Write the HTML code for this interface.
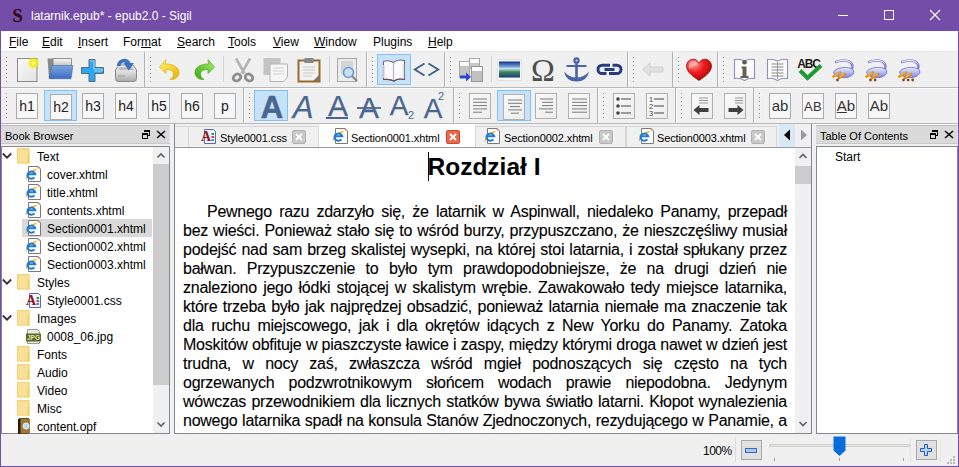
<!DOCTYPE html>
<html><head><meta charset="utf-8"><style>
*{margin:0;padding:0;box-sizing:border-box}
html,body{width:959px;height:467px;overflow:hidden}
body{position:relative;background:#f0f0f0;font-family:"Liberation Sans",sans-serif;font-size:12px;color:#000}
.a{position:absolute}
u{text-decoration:underline;text-underline-offset:1px;text-decoration-thickness:1px}
.grip{position:absolute;width:1px;background-image:linear-gradient(#8e8e8e 1px,transparent 1px);background-size:1px 4px}
.griph{position:absolute;width:1px;background-image:linear-gradient(#fdfdfd 1px,transparent 1px);background-size:1px 4px}
.hb{position:absolute;border:1px solid #ababab;background:#f7f7f7;font-size:14px;text-align:center;line-height:24px;color:#222}
.ib{position:absolute;border:1px solid #b0b0b0;background:linear-gradient(135deg,#fafafa,#ececec)}
.jl{position:absolute;font-size:16px;letter-spacing:-0.26px;-webkit-text-stroke:0.1px #000;line-height:19px;height:19px;text-align:justify;text-align-last:justify;white-space:nowrap;overflow:visible}
</style></head><body>
<div class="a" style="left:0px;top:0px;width:959px;height:31px;background:#744da9"></div>
<svg class="a" style="left:11px;top:7px" width="13" height="16" viewBox="0 0 13 16"><text x="6.5" y="14.5" text-anchor="middle" font-family="Liberation Serif" font-weight="bold" font-size="19" fill="#300810">S</text></svg>
<div class="a" style="left:31px;top:9px;white-space:nowrap;color:#fff;font-size:12px">latarnik.epub* - epub2.0 - Sigil</div>
<div class="a" style="left:838px;top:15px;width:10px;height:1px;background:#fff"></div>
<div class="a" style="left:884px;top:10px;width:10px;height:10px;border:1px solid #fff"></div>
<svg class="a" style="left:929px;top:9px" width="12" height="12" viewBox="0 0 12 12"><path d="M1 1L11 11M11 1L1 11" stroke="#fff" stroke-width="1.1"/></svg>
<div class="a" style="left:1px;top:31px;width:957px;height:20px;background:#fff"></div>
<div class="a" style="left:9px;top:35px;white-space:nowrap;font-size:12px"><u>F</u>ile</div>
<div class="a" style="left:42px;top:35px;white-space:nowrap;font-size:12px"><u>E</u>dit</div>
<div class="a" style="left:78px;top:35px;white-space:nowrap;font-size:12px"><u>I</u>nsert</div>
<div class="a" style="left:123px;top:35px;white-space:nowrap;font-size:12px">For<u>m</u>at</div>
<div class="a" style="left:177px;top:35px;white-space:nowrap;font-size:12px"><u>S</u>earch</div>
<div class="a" style="left:228px;top:35px;white-space:nowrap;font-size:12px"><u>T</u>ools</div>
<div class="a" style="left:273px;top:35px;white-space:nowrap;font-size:12px"><u>V</u>iew</div>
<div class="a" style="left:314px;top:35px;white-space:nowrap;font-size:12px"><u>W</u>indow</div>
<div class="a" style="left:373px;top:35px;white-space:nowrap;font-size:12px">Plugins</div>
<div class="a" style="left:428px;top:35px;white-space:nowrap;font-size:12px"><u>H</u>elp</div>
<div class="a" style="left:1px;top:51px;width:957px;height:73px;background:#f0f0f0"></div>
<div class="a" style="left:1px;top:51px;width:957px;height:1px;background:#e6e6e6"></div>
<div class="a" style="left:1px;top:87px;width:957px;height:1px;background:#b9b9b9"></div>
<div class="a" style="left:1px;top:88px;width:957px;height:1px;background:#fbfbfb"></div>
<div class="a" style="left:1px;top:123px;width:957px;height:1px;background:#b9b9b9"></div>
<div class="a" style="left:1px;top:124px;width:957px;height:1px;background:#fbfbfb"></div>
<div class="a griph" style="left:7px;top:58px;height:25px"></div>
<div class="a grip" style="left:6px;top:57px;height:25px"></div>
<div class="a griph" style="left:151px;top:58px;height:25px"></div>
<div class="a grip" style="left:150px;top:57px;height:25px"></div>
<div class="a griph" style="left:373px;top:58px;height:25px"></div>
<div class="a grip" style="left:372px;top:57px;height:25px"></div>
<div class="a griph" style="left:451px;top:58px;height:25px"></div>
<div class="a grip" style="left:450px;top:57px;height:25px"></div>
<div class="a griph" style="left:634px;top:58px;height:25px"></div>
<div class="a grip" style="left:633px;top:57px;height:25px"></div>
<div class="a griph" style="left:679px;top:58px;height:25px"></div>
<div class="a grip" style="left:678px;top:57px;height:25px"></div>
<div class="a griph" style="left:724px;top:58px;height:25px"></div>
<div class="a grip" style="left:723px;top:57px;height:25px"></div>
<div class="a" style="left:144px;top:52px;width:1px;height:35px;background:#b0b0b0"></div>
<div class="a" style="left:145px;top:52px;width:1px;height:35px;background:#fbfbfb"></div>
<div class="a" style="left:366px;top:52px;width:1px;height:35px;background:#b0b0b0"></div>
<div class="a" style="left:367px;top:52px;width:1px;height:35px;background:#fbfbfb"></div>
<div class="a" style="left:444px;top:52px;width:1px;height:35px;background:#b0b0b0"></div>
<div class="a" style="left:445px;top:52px;width:1px;height:35px;background:#fbfbfb"></div>
<div class="a" style="left:627px;top:52px;width:1px;height:35px;background:#b0b0b0"></div>
<div class="a" style="left:628px;top:52px;width:1px;height:35px;background:#fbfbfb"></div>
<div class="a" style="left:672px;top:52px;width:1px;height:35px;background:#b0b0b0"></div>
<div class="a" style="left:673px;top:52px;width:1px;height:35px;background:#fbfbfb"></div>
<div class="a" style="left:717px;top:52px;width:1px;height:35px;background:#b0b0b0"></div>
<div class="a" style="left:718px;top:52px;width:1px;height:35px;background:#fbfbfb"></div>
<div class="a" style="left:223px;top:56px;width:1px;height:26px;background:#d4d4d4"></div>
<div class="a" style="left:329px;top:56px;width:1px;height:26px;background:#d4d4d4"></div>
<div class="a" style="left:491px;top:56px;width:1px;height:26px;background:#d4d4d4"></div>
<div class="a griph" style="left:7px;top:94px;height:25px"></div>
<div class="a grip" style="left:6px;top:93px;height:25px"></div>
<div class="a griph" style="left:250px;top:94px;height:25px"></div>
<div class="a grip" style="left:249px;top:93px;height:25px"></div>
<div class="a griph" style="left:460px;top:94px;height:25px"></div>
<div class="a grip" style="left:459px;top:93px;height:25px"></div>
<div class="a griph" style="left:604px;top:94px;height:25px"></div>
<div class="a grip" style="left:603px;top:93px;height:25px"></div>
<div class="a griph" style="left:682px;top:94px;height:25px"></div>
<div class="a grip" style="left:681px;top:93px;height:25px"></div>
<div class="a griph" style="left:760px;top:94px;height:25px"></div>
<div class="a grip" style="left:759px;top:93px;height:25px"></div>
<div class="a" style="left:243px;top:88px;width:1px;height:35px;background:#b0b0b0"></div>
<div class="a" style="left:244px;top:88px;width:1px;height:35px;background:#fbfbfb"></div>
<div class="a" style="left:453px;top:88px;width:1px;height:35px;background:#b0b0b0"></div>
<div class="a" style="left:454px;top:88px;width:1px;height:35px;background:#fbfbfb"></div>
<div class="a" style="left:597px;top:88px;width:1px;height:35px;background:#b0b0b0"></div>
<div class="a" style="left:598px;top:88px;width:1px;height:35px;background:#fbfbfb"></div>
<div class="a" style="left:675px;top:88px;width:1px;height:35px;background:#b0b0b0"></div>
<div class="a" style="left:676px;top:88px;width:1px;height:35px;background:#fbfbfb"></div>
<div class="a" style="left:753px;top:88px;width:1px;height:35px;background:#b0b0b0"></div>
<div class="a" style="left:754px;top:88px;width:1px;height:35px;background:#fbfbfb"></div>
<svg class="a" style="left:16px;top:57px" width="24" height="26" viewBox="0 0 24 26"><defs><linearGradient id="gd" x1="0" y1="0" x2="1" y2="1"><stop offset="0" stop-color="#fafafa"/><stop offset="1" stop-color="#e2e2e2"/></linearGradient><radialGradient id="gy"><stop offset="0" stop-color="#ffffa0"/><stop offset=".45" stop-color="#f4ec10"/><stop offset="1" stop-color="#f4ec10" stop-opacity="0"/></radialGradient></defs><rect x="1.5" y="1.5" width="19.5" height="23" fill="url(#gd)" stroke="#8a8a8a"/><circle cx="17.5" cy="6" r="6.5" fill="url(#gy)"/></svg>
<svg class="a" style="left:47px;top:57px" width="27" height="23" viewBox="0 0 27 23"><defs><linearGradient id="gf" x1="0" y1="0" x2="0" y2="1"><stop offset="0" stop-color="#7aa8e0"/><stop offset="1" stop-color="#3a6cc0"/></linearGradient><linearGradient id="gpp" x1="0" y1="0" x2="0" y2="1"><stop offset="0" stop-color="#fafafa"/><stop offset="1" stop-color="#b8b8b8"/></linearGradient></defs><path d="M0.5 1.5H7V21.5H2z" fill="#8a8a8a"/><path d="M6 1.5H24.5V10H6z" fill="url(#gpp)" stroke="#7a7a7a" stroke-width=".8"/><path d="M4.7 8.6H25.9L24 21.7H2.1z" fill="url(#gf)" stroke="#3a64a8" stroke-width=".6"/></svg>
<svg class="a" style="left:80px;top:58px" width="25" height="24" viewBox="0 0 25 24"><path d="M9 1.5h6v8h8.5v6H15v8H9v-8H1.5v-6H9z" fill="#2aa7f0" stroke="#5e6a74" stroke-width="1"/><path d="M10 3h4v8h8v2h-8" fill="none" stroke="#8fd6ff" stroke-width="1"/></svg>
<svg class="a" style="left:113px;top:57px" width="26" height="26" viewBox="0 0 26 26"><defs><linearGradient id="gs" x1="0" y1="0" x2="0" y2="1"><stop offset="0" stop-color="#f4f4f4"/><stop offset=".5" stop-color="#d8d8d8"/><stop offset="1" stop-color="#a8a8a8"/></linearGradient></defs><path d="M2.5 13L6 8H20L23.5 13V21.5Q23.5 24.5 20.5 24.5H5.5Q2.5 24.5 2.5 21.5Z" fill="url(#gs)" stroke="#8a8a8a"/><path d="M5 13H21L19 10H7z" fill="#bcbcbc"/><path d="M5 19h7" stroke="#9a9a9a"/><path d="M5.5 9C6.5 3.5 13 1.5 16 6.5" fill="none" stroke="#3a72c4" stroke-width="3.6"/><path d="M10.5 6H21L15.8 13.5z" fill="#3a72c4"/></svg>
<svg class="a" style="left:158px;top:58px" width="23" height="23" viewBox="0 0 23 23"><defs><linearGradient id="gu" x1="0" y1="0" x2="1" y2="1"><stop offset="0" stop-color="#fff070"/><stop offset="1" stop-color="#e8b400"/></linearGradient><linearGradient id="gr" x1="1" y1="0" x2="0" y2="1"><stop offset="0" stop-color="#a8f070"/><stop offset="1" stop-color="#3aa810"/></linearGradient></defs><path d="M8 1.5L1.5 9 8 15.5v-4c4.5 0 7.5 1.5 7.5 4.5 0 2.5-1.5 4.5-3.5 5.5 5 .5 9-2.5 9-7 0-5-5-8.5-13.5-8.5z" fill="url(#gu)" stroke="#d8a800" stroke-width=".6"/></svg>
<svg class="a" style="left:193px;top:58px" width="23" height="23" viewBox="0 0 23 23"><defs><linearGradient id="gr2" x1="1" y1="0" x2="0" y2="1"><stop offset="0" stop-color="#a8f070"/><stop offset="1" stop-color="#3aa810"/></linearGradient></defs><path d="M15 1.5L21.5 9 15 15.5v-4c-4.5 0-7.5 1.5-7.5 4.5 0 2.5 1.5 4.5 3.5 5.5-5 .5-9-2.5-9-7 0-5 5-8.5 13.5-8.5z" fill="url(#gr2)" stroke="#3e9a10" stroke-width=".6"/></svg>
<svg class="a" style="left:231px;top:57px" width="24" height="26" viewBox="0 0 24 26"><path d="M5 1.5l8.5 15M19 1.5l-8.5 15" stroke="#b4b4b4" stroke-width="2.6"/><ellipse cx="6" cy="20.5" rx="4" ry="3.2" transform="rotate(-35 6 20.5)" fill="none" stroke="#8e8e8e" stroke-width="2.8"/><ellipse cx="18" cy="20.5" rx="4" ry="3.2" transform="rotate(35 18 20.5)" fill="none" stroke="#8e8e8e" stroke-width="2.8"/></svg>
<svg class="a" style="left:263px;top:57px" width="26" height="26" viewBox="0 0 26 26"><rect x="0.5" y="1" width="17" height="17" fill="#c4c4c4"/><path d="M7 7h17.5v13l-4 4.5H7z" fill="#f6f6f6" stroke="#b4b4b4"/><path d="M10 11h11M10 14h11M10 17h11" stroke="#d0d0d0"/></svg>
<svg class="a" style="left:297px;top:57px" width="24" height="26" viewBox="0 0 24 26"><rect x="1.5" y="3.5" width="21" height="21" fill="#f2f2f2" stroke="#9a6a28" stroke-width="2"/><rect x="7" y="1" width="10" height="5" rx="1.5" fill="#888"/><path d="M6 10h12M6 13h12M6 16h12M6 19h9" stroke="#c8c8c8"/><path d="M16 24l6-6v6z" fill="#777"/></svg>
<svg class="a" style="left:336px;top:57px" width="26" height="27" viewBox="0 0 26 27"><rect x="1.5" y="1.5" width="19" height="23" fill="#ececec" stroke="#a8a8a8"/><rect x="5" y="4" width="12" height="13" fill="#d4d4d4"/><circle cx="12.5" cy="15.5" r="5" fill="#c8e0f4" stroke="#6a9ad0" stroke-width="1.6"/><path d="M16 19l5 5" stroke="#8a8a8a" stroke-width="2.2"/></svg>
<div class="a" style="left:377px;top:54px;width:34px;height:31px;background:#c6e1f8;border:1px solid #84c2f4"></div>
<svg class="a" style="left:381px;top:58px" width="26" height="25" viewBox="0 0 26 25"><path d="M2.5 3.5C5 2.5 9 2.5 12.5 4.5 15 2 19 1.5 23.5 2.5V21.5C19 20.5 15.5 21 13 23 10 21.5 6 21 2.5 21.5z" fill="#fafafa" stroke="#6a6a80" stroke-width="1.1"/><path d="M12.5 4.5V22.5" stroke="#b8b8c0" stroke-width="1.2"/><path d="M3 7v13M22.5 6v14" stroke="#dcdcdc" stroke-width="1.5"/><path d="M2.5 21.5C6 21 10 21.5 13 23 15.5 21 19 20.5 23.5 21.5" fill="none" stroke="#6a4a5a" stroke-width="1.2"/></svg>
<svg class="a" style="left:413px;top:60px" width="27" height="19" viewBox="0 0 27 19"><path d="M11.5 3.5L1.8 9.5 11.5 15.5M15.5 3.5L25.2 9.5 15.5 15.5" fill="none" stroke="#415e8e" stroke-width="1.9"/></svg>
<svg class="a" style="left:457px;top:57px" width="27" height="26" viewBox="0 0 27 26"><rect x="2.5" y="4.5" width="10" height="16" fill="#c4c4c4" stroke="#a8a8a8"/><rect x="3" y="5" width="9" height="4" fill="#fafafa"/><rect x="12.5" y="1.5" width="10" height="10" fill="#c8c8c8" stroke="#a8a8a8"/><rect x="13" y="2" width="9" height="4" fill="#fafafa"/><rect x="14.5" y="9.5" width="11" height="15" fill="#c0c0c0" stroke="#989898"/><rect x="15" y="10" width="10" height="4" fill="#fafafa"/><path d="M3 18.5h6v-3l5 4.5-5 4.5v-3H3z" fill="#2a4ac8"/></svg>
<svg class="a" style="left:497px;top:59px" width="25" height="22" viewBox="0 0 25 22"><defs><linearGradient id="gi" x1="0" y1="0" x2="0" y2="1"><stop offset="0" stop-color="#10308a"/><stop offset=".3" stop-color="#6a9ad0"/><stop offset=".45" stop-color="#c8e0f0"/><stop offset=".65" stop-color="#3a8a5a"/><stop offset=".85" stop-color="#2a5a7a"/><stop offset="1" stop-color="#1a3a5a"/></linearGradient></defs><rect x="0.5" y="0.5" width="24" height="21" fill="#f6f6f6" stroke="#e0e0e0"/><rect x="2" y="2.5" width="21" height="16" fill="url(#gi)"/></svg>
<svg class="a" style="left:531px;top:57px" width="24" height="26" viewBox="0 0 24 26"><text x="12" y="23.5" text-anchor="middle" font-family="Liberation Serif" font-size="32" fill="#4e4e4e">&#937;</text></svg>
<svg class="a" style="left:563px;top:56px" width="27" height="28" viewBox="0 0 27 28"><circle cx="13.5" cy="4.5" r="2.1" fill="#dde4f4" stroke="#4a62a8" stroke-width="2.2"/><path d="M13.5 6.5V24" stroke="#4a62a8" stroke-width="2.6"/><path d="M3.5 10H23.5" stroke="#4a62a8" stroke-width="2"/><path d="M1 15.5Q3 25.5 13.5 25.5Q24 25.5 26 15.5Q21 21.5 13.5 21.5Q6 21.5 1 15.5z" fill="#4a62a8"/></svg>
<svg class="a" style="left:596px;top:62px" width="27" height="15" viewBox="0 0 27 15"><path d="M14 3.2H6.2A4.2 4.2 0 0 0 6.2 11.6H10.5M13 11.6H20.8A4.2 4.2 0 0 0 20.8 3.2H16.5M8.5 7.4H18.5" fill="none" stroke="#283c84" stroke-width="3"/></svg>
<svg class="a" style="left:641px;top:61px" width="24" height="17" viewBox="0 0 24 17"><path d="M1.5 8.5L9 2v4h13v5H9v4z" fill="#e0e0e0" stroke="#cfcfcf"/></svg>
<svg class="a" style="left:685px;top:57px" width="28" height="26" viewBox="0 0 28 26"><defs><radialGradient id="gh" cx=".3" cy=".25" r=".85"><stop offset="0" stop-color="#ff9a9a"/><stop offset=".45" stop-color="#ee2020"/><stop offset="1" stop-color="#a80000"/></radialGradient></defs><path d="M14 23.5C8 19.5 1.5 15 1.5 9.2 1.5 5 4.5 2.2 8.2 2.2 11 2.2 13 4 14 6 15 4 17 2.2 19.8 2.2 23.5 2.2 26.5 5 26.5 9.2 26.5 15 20 19.5 14 23.5z" fill="url(#gh)" stroke="#8a0000" stroke-width=".7"/><path d="M4 8.5C4 5.5 6 4 8.5 4 11 4 12.5 5.5 13.5 7.5 10 8 7 10 4.5 12z" fill="#ffc8c8" opacity=".6"/></svg>
<svg class="a" style="left:732px;top:57px" width="25" height="26" viewBox="0 0 25 26"><path d="M2.5 2.5V21.5Q8 20.5 12.5 23.5Q17 20.5 22.5 21.5V2.5Q17 1.5 12.5 4Q8 1.5 2.5 2.5z" fill="#fbfbfb" stroke="#9090b8" stroke-width="1.1"/><circle cx="12.5" cy="5.2" r="2.3" fill="#5a5a58"/><path d="M9.5 9.5h5v9.5h2v2h-8v-2h2V11.5h-1z" fill="#6a6250"/></svg>
<svg class="a" style="left:765px;top:57px" width="25" height="26" viewBox="0 0 25 26"><path d="M2.5 2.5V21.5Q8 20.5 12.5 23.5Q17 20.5 22.5 21.5V2.5Q17 1.5 12.5 4Q8 1.5 2.5 2.5z" fill="#fbfbfb" stroke="#9090b8" stroke-width="1.1"/><path d="M6.5 7h12M6.5 10h12M6.5 13h12M6.5 16h12M6.5 19h12" stroke="#8a8a8a" stroke-width="1.1"/><path d="M12.5 5v17" stroke="#8a8a8a" stroke-width=".8"/></svg>
<svg class="a" style="left:796px;top:56px" width="27" height="27" viewBox="0 0 27 27"><text x="12.5" y="12" text-anchor="middle" font-family="Liberation Sans" font-weight="bold" font-size="13" fill="#1a1a1a" letter-spacing="-1.3" transform="translate(12.5 0) scale(0.92 1) translate(-12.5 0)">ABC</text><path d="M4 14.5l7.5 7.5L25 9.5" fill="none" stroke="#1e9a30" stroke-width="4"/></svg>
<svg class="a" style="left:831px;top:58px" width="26" height="26" viewBox="0 0 26 26"><defs><linearGradient id="gp" x1="0" y1="0" x2="0" y2="1"><stop offset="0" stop-color="#e8ecff"/><stop offset="1" stop-color="#8088e0"/></linearGradient></defs><path d="M5 4C11 1.5 18 2 20.5 5.5 22 8 21.5 10 20.5 11.5" fill="none" stroke="#8a8ad8" stroke-width="2.6" stroke-linecap="round"/><path d="M5 4C11 1.5 18 2 20.5 5.5" fill="none" stroke="#f4f4ff" stroke-width="1"/><path d="M2.5 14C5 9 18 8 22 11.5 24.5 15.5 20.5 19 15 19.5 9 20 3.5 18.5 2.5 14z" fill="url(#gp)" stroke="#6a6ac0" stroke-width=".8"/><path d="M2.5 18.5L9 14.5M8 20L14 16" stroke="#e88a00" stroke-width="2.6" stroke-linecap="round"/><path d="M3.5 17.5L8.5 14.6M9 19L13.5 16.1" stroke="#ffd040" stroke-width=".9"/><circle cx="6.5" cy="22" r="1.4" fill="#8a4a20"/></svg>
<svg class="a" style="left:864px;top:58px" width="26" height="26" viewBox="0 0 26 26"><defs><linearGradient id="gp" x1="0" y1="0" x2="0" y2="1"><stop offset="0" stop-color="#e8ecff"/><stop offset="1" stop-color="#8088e0"/></linearGradient></defs><path d="M5 4C11 1.5 18 2 20.5 5.5 22 8 21.5 10 20.5 11.5" fill="none" stroke="#8a8ad8" stroke-width="2.6" stroke-linecap="round"/><path d="M5 4C11 1.5 18 2 20.5 5.5" fill="none" stroke="#f4f4ff" stroke-width="1"/><path d="M2.5 14C5 9 18 8 22 11.5 24.5 15.5 20.5 19 15 19.5 9 20 3.5 18.5 2.5 14z" fill="url(#gp)" stroke="#6a6ac0" stroke-width=".8"/><path d="M2.5 18.5L9 14.5M8 20L14 16" stroke="#e88a00" stroke-width="2.6" stroke-linecap="round"/><path d="M3.5 17.5L8.5 14.6M9 19L13.5 16.1" stroke="#ffd040" stroke-width=".9"/><circle cx="6.5" cy="22" r="1.4" fill="#8a4a20"/><circle cx="11.1" cy="22" r="1.4" fill="#8a4a20"/></svg>
<svg class="a" style="left:897px;top:58px" width="26" height="26" viewBox="0 0 26 26"><defs><linearGradient id="gp" x1="0" y1="0" x2="0" y2="1"><stop offset="0" stop-color="#e8ecff"/><stop offset="1" stop-color="#8088e0"/></linearGradient></defs><path d="M5 4C11 1.5 18 2 20.5 5.5 22 8 21.5 10 20.5 11.5" fill="none" stroke="#8a8ad8" stroke-width="2.6" stroke-linecap="round"/><path d="M5 4C11 1.5 18 2 20.5 5.5" fill="none" stroke="#f4f4ff" stroke-width="1"/><path d="M2.5 14C5 9 18 8 22 11.5 24.5 15.5 20.5 19 15 19.5 9 20 3.5 18.5 2.5 14z" fill="url(#gp)" stroke="#6a6ac0" stroke-width=".8"/><path d="M2.5 18.5L9 14.5M8 20L14 16" stroke="#e88a00" stroke-width="2.6" stroke-linecap="round"/><path d="M3.5 17.5L8.5 14.6M9 19L13.5 16.1" stroke="#ffd040" stroke-width=".9"/><circle cx="6.5" cy="22" r="1.4" fill="#8a4a20"/><circle cx="11.1" cy="22" r="1.4" fill="#8a4a20"/><circle cx="15.7" cy="22" r="1.4" fill="#8a4a20"/></svg>
<div class="a hb" style="left:16px;top:93px;width:22px;height:26px"><span>h1</span></div>
<div class="a" style="left:44px;top:90px;width:33px;height:31px;background:#c6e1f8;border:1px solid #84c2f4"></div>
<div class="a hb" style="left:50px;top:94px;width:22px;height:26px"><span>h2</span></div>
<div class="a hb" style="left:82px;top:93px;width:22px;height:26px"><span>h3</span></div>
<div class="a hb" style="left:115px;top:93px;width:22px;height:26px"><span>h4</span></div>
<div class="a hb" style="left:148px;top:93px;width:22px;height:26px"><span>h5</span></div>
<div class="a hb" style="left:181px;top:93px;width:22px;height:26px"><span>h6</span></div>
<div class="a hb" style="left:214px;top:93px;width:22px;height:26px"><span>p</span></div>
<div class="a" style="left:254px;top:90px;width:34px;height:31px;background:#c6e1f8;border:1px solid #84c2f4"></div>
<svg class="a" style="left:258px;top:91px" width="28" height="30" viewBox="0 0 28 30"><text x="14" y="27" text-anchor="middle" font-family="Liberation Sans" font-weight="bold" font-size="31" fill="#4a6690" stroke="#4a6690" stroke-width="0.6">A</text></svg>
<svg class="a" style="left:289px;top:91px" width="28" height="30" viewBox="0 0 28 30"><text x="14" y="27" text-anchor="middle" font-family="Liberation Sans" font-style="italic" font-size="31" fill="#4a6690" stroke="#4a6690" stroke-width="0.25">A</text></svg>
<svg class="a" style="left:324px;top:91px" width="28" height="30" viewBox="0 0 28 30"><text x="14" y="25" text-anchor="middle" font-family="Liberation Sans" font-size="30" fill="#4a6690" stroke="#4a6690" stroke-width="0.25">A</text><path d="M2 27h22" stroke="#4a6690" stroke-width="2"/></svg>
<svg class="a" style="left:355px;top:91px" width="28" height="30" viewBox="0 0 28 30"><text x="14" y="27" text-anchor="middle" font-family="Liberation Sans" font-size="30" fill="#4a6690" stroke="#4a6690" stroke-width="0.25">A</text><path d="M2 17h24" stroke="#4a6690" stroke-width="1.8"/></svg>
<svg class="a" style="left:389px;top:91px" width="28" height="30" viewBox="0 0 28 30"><text x="10" y="24" text-anchor="middle" font-family="Liberation Sans" font-size="28" fill="#4a6690" stroke="#4a6690" stroke-width="0.25">A</text><text x="22" y="28" text-anchor="middle" font-family="Liberation Sans" font-size="11" fill="#4a6690">2</text></svg>
<svg class="a" style="left:421px;top:91px" width="28" height="30" viewBox="0 0 28 30"><text x="12" y="27" text-anchor="middle" font-family="Liberation Sans" font-size="28" fill="#4a6690" stroke="#4a6690" stroke-width="0.25">A</text><text x="20" y="9" text-anchor="middle" font-family="Liberation Sans" font-size="11" fill="#4a6690">2</text></svg>
<div class="a ib" style="left:469px;top:93px;width:22px;height:26px"></div>
<svg class="a" style="left:469px;top:93px" width="22" height="26" viewBox="0 0 22 26"><path d="M4 6h14M4 9.3h14M4 12.6h14M4 15.9h14M4 19.2h9" stroke="#7a7a7a" stroke-width="1"/></svg>
<div class="a" style="left:497px;top:90px;width:34px;height:31px;background:#c6e1f8;border:1px solid #84c2f4"></div>
<div class="a ib" style="left:503px;top:94px;width:22px;height:26px"></div>
<svg class="a" style="left:503px;top:94px" width="22" height="26" viewBox="0 0 22 26"><path d="M5 6h14M5 9.3h14M7 12.6h10M5 15.9h14M8 19.2h8" stroke="#7a7a7a" stroke-width="1"/></svg>
<div class="a ib" style="left:535px;top:93px;width:22px;height:26px"></div>
<svg class="a" style="left:535px;top:93px" width="22" height="26" viewBox="0 0 22 26"><path d="M5 6h13M7 9.3h11M7 12.6h11M4 15.9h14M10 19.2h8" stroke="#7a7a7a" stroke-width="1"/></svg>
<div class="a ib" style="left:568px;top:93px;width:22px;height:26px"></div>
<svg class="a" style="left:568px;top:93px" width="22" height="26" viewBox="0 0 22 26"><path d="M4 6h15M4 9.3h15M4 12.6h15M4 15.9h15M4 19.2h15" stroke="#7a7a7a" stroke-width="1"/></svg>
<div class="a ib" style="left:613px;top:93px;width:22px;height:26px"></div>
<svg class="a" style="left:613px;top:93px" width="22" height="26" viewBox="0 0 22 26"><circle cx="5" cy="6" r="1.8" fill="#444"/><circle cx="5" cy="13" r="1.8" fill="#444"/><circle cx="5" cy="20" r="1.8" fill="#444"/><path d="M8 6h10M8 13h10M8 20h10" stroke="#444" stroke-width="1.2"/></svg>
<div class="a ib" style="left:646px;top:93px;width:22px;height:26px"></div>
<svg class="a" style="left:646px;top:93px" width="22" height="26" viewBox="0 0 22 26"><text x="3" y="9" font-family="Liberation Sans" font-size="7.5" fill="#444">1</text><text x="3" y="16" font-family="Liberation Sans" font-size="7.5" fill="#444">2</text><text x="3" y="23" font-family="Liberation Sans" font-size="7.5" fill="#444">3</text><path d="M8 6h10M8 13h10M8 20h10" stroke="#444" stroke-width="1.2"/></svg>
<div class="a ib" style="left:691px;top:93px;width:22px;height:26px"></div>
<svg class="a" style="left:691px;top:93px" width="22" height="26" viewBox="0 0 22 26"><path d="M8 5h9M8 7.5h9M8 10h9" stroke="#999"/><path d="M2.5 17l6-5v3h9v4h-9v3z" fill="#404040"/></svg>
<div class="a ib" style="left:724px;top:93px;width:22px;height:26px"></div>
<svg class="a" style="left:724px;top:93px" width="22" height="26" viewBox="0 0 22 26"><path d="M11 5h8M11 7.5h8M11 10h8" stroke="#999"/><path d="M19.5 17l-6-5v3h-9v4h9v3z" fill="#404040"/></svg>
<div class="a hb" style="left:769px;top:93px;width:22px;height:26px;font-size:15px;color:#333">ab</div>
<div class="a hb" style="left:802px;top:93px;width:22px;height:26px;font-size:13px;color:#333;letter-spacing:0.3px;line-height:25px">AB</div>
<div class="a hb" style="left:835px;top:93px;width:22px;height:26px;font-size:15px;color:#333"><span style="text-decoration:underline;text-decoration-thickness:1px;text-underline-offset:1px">A</span>b</div>
<div class="a hb" style="left:868px;top:93px;width:22px;height:26px;font-size:15px;color:#333">Ab</div>
<div class="a" style="left:1px;top:125px;width:169px;height:19px;background:#dadada;border-top:1px solid #bcbcbc;border-bottom:1px solid #c8c8c8;border-right:1px solid #e4e4e4"></div>
<div class="a" style="left:5px;top:130px;white-space:nowrap;font-size:11px;color:#000">Book Browser</div>
<svg class="a" style="left:141px;top:130px" width="10" height="10" viewBox="0 0 10 10"><rect x="3" y="0" width="6" height="2" fill="#000"/><rect x="8" y="0" width="1" height="6" fill="#000"/><rect x="7" y="5" width="2" height="1" fill="#000"/><rect x="1" y="3" width="6" height="6" fill="#dadada"/><rect x="1" y="3" width="6" height="2" fill="#000"/><rect x="1" y="3" width="1" height="6" fill="#000"/><rect x="6" y="3" width="1" height="6" fill="#000"/><rect x="1" y="8" width="6" height="1" fill="#000"/></svg>
<svg class="a" style="left:156px;top:130px" width="10" height="9" viewBox="0 0 10 9"><path d="M1 1l8 7M9 1l-8 7" stroke="#000" stroke-width="1.5"/></svg>
<div class="a" style="left:816px;top:125px;width:142px;height:19px;background:#dadada;border-top:1px solid #bcbcbc;border-bottom:1px solid #c8c8c8;border-right:1px solid #e4e4e4"></div>
<div class="a" style="left:820px;top:130px;white-space:nowrap;font-size:11px;color:#000">Table Of Contents</div>
<svg class="a" style="left:929px;top:130px" width="10" height="10" viewBox="0 0 10 10"><rect x="3" y="0" width="6" height="2" fill="#000"/><rect x="8" y="0" width="1" height="6" fill="#000"/><rect x="7" y="5" width="2" height="1" fill="#000"/><rect x="1" y="3" width="6" height="6" fill="#dadada"/><rect x="1" y="3" width="6" height="2" fill="#000"/><rect x="1" y="3" width="1" height="6" fill="#000"/><rect x="6" y="3" width="1" height="6" fill="#000"/><rect x="1" y="8" width="6" height="1" fill="#000"/></svg>
<svg class="a" style="left:944px;top:130px" width="10" height="9" viewBox="0 0 10 9"><path d="M1 1l8 7M9 1l-8 7" stroke="#000" stroke-width="1.5"/></svg>
<div class="a" style="left:1px;top:146px;width:169px;height:288px;background:#fff;border:1px solid #828790"></div>
<div class="a" style="left:153px;top:147px;width:16px;height:286px;background:#f0f0f0"></div>
<div class="a" style="left:153px;top:164px;width:16px;height:221px;background:#cdcdcd"></div>
<svg class="a" style="left:153px;top:147px" width="16" height="17" viewBox="0 0 16 17"><path d="M4.5 10.5L8 7l3.5 3.5" fill="none" stroke="#606060" stroke-width="1.6"/></svg>
<svg class="a" style="left:153px;top:416px" width="16" height="17" viewBox="0 0 16 17"><path d="M4.5 6.5L8 10l3.5-3.5" fill="none" stroke="#606060" stroke-width="1.6"/></svg>
<div class="a" style="left:22px;top:219px;width:130px;height:18px;background:#d9d9d9"></div>
<svg class="a" style="left:1px;top:151px" width="12" height="10" viewBox="0 0 12 10"><path d="M1.8 2.5L6 6.7l4.2-4.2" fill="none" stroke="#333" stroke-width="1.8"/></svg>
<svg class="a" style="left:16px;top:147px" width="15" height="17" viewBox="0 0 15 17"><rect x="1" y="1.2" width="12.5" height="15.3" fill="#f9e09a"/><rect x="1.5" y="1.7" width="11.5" height="14.3" fill="none" stroke="#f0d26a" stroke-width="1"/><path d="M11 8l2.5 -1.5V16.5H11z" fill="#f2d470"/></svg>
<div class="a" style="left:37px;top:150px;white-space:nowrap;font-size:12px">Text</div>
<svg class="a" style="left:25px;top:165px" width="17" height="18" viewBox="0 0 17 18"><path d="M3.5 1.5H13l2.5 2.5v12.5H3.5z" fill="#fff" stroke="#7a7a7a"/><circle cx="13.5" cy="2.5" r="0.9" fill="#e07070"/><path d="M1 13.8C2 9.5 6 5.5 11.5 4.5" fill="none" stroke="#f4b800" stroke-width="1.3"/><path d="M2.6 9.3H10.2A3.9 3.6 0 1 0 9.4 12.4" fill="none" stroke="#1f7ad8" stroke-width="2.1"/></svg>
<div class="a" style="left:47px;top:168px;white-space:nowrap;font-size:12px">cover.xhtml</div>
<svg class="a" style="left:25px;top:183px" width="17" height="18" viewBox="0 0 17 18"><path d="M3.5 1.5H13l2.5 2.5v12.5H3.5z" fill="#fff" stroke="#7a7a7a"/><circle cx="13.5" cy="2.5" r="0.9" fill="#e07070"/><path d="M1 13.8C2 9.5 6 5.5 11.5 4.5" fill="none" stroke="#f4b800" stroke-width="1.3"/><path d="M2.6 9.3H10.2A3.9 3.6 0 1 0 9.4 12.4" fill="none" stroke="#1f7ad8" stroke-width="2.1"/></svg>
<div class="a" style="left:47px;top:186px;white-space:nowrap;font-size:12px">title.xhtml</div>
<svg class="a" style="left:25px;top:201px" width="17" height="18" viewBox="0 0 17 18"><path d="M3.5 1.5H13l2.5 2.5v12.5H3.5z" fill="#fff" stroke="#7a7a7a"/><circle cx="13.5" cy="2.5" r="0.9" fill="#e07070"/><path d="M1 13.8C2 9.5 6 5.5 11.5 4.5" fill="none" stroke="#f4b800" stroke-width="1.3"/><path d="M2.6 9.3H10.2A3.9 3.6 0 1 0 9.4 12.4" fill="none" stroke="#1f7ad8" stroke-width="2.1"/></svg>
<div class="a" style="left:47px;top:204px;white-space:nowrap;font-size:12px">contents.xhtml</div>
<svg class="a" style="left:25px;top:219px" width="17" height="18" viewBox="0 0 17 18"><path d="M3.5 1.5H13l2.5 2.5v12.5H3.5z" fill="#fff" stroke="#7a7a7a"/><circle cx="13.5" cy="2.5" r="0.9" fill="#e07070"/><path d="M1 13.8C2 9.5 6 5.5 11.5 4.5" fill="none" stroke="#f4b800" stroke-width="1.3"/><path d="M2.6 9.3H10.2A3.9 3.6 0 1 0 9.4 12.4" fill="none" stroke="#1f7ad8" stroke-width="2.1"/></svg>
<div class="a" style="left:47px;top:222px;white-space:nowrap;font-size:12px">Section0001.xhtml</div>
<svg class="a" style="left:25px;top:237px" width="17" height="18" viewBox="0 0 17 18"><path d="M3.5 1.5H13l2.5 2.5v12.5H3.5z" fill="#fff" stroke="#7a7a7a"/><circle cx="13.5" cy="2.5" r="0.9" fill="#e07070"/><path d="M1 13.8C2 9.5 6 5.5 11.5 4.5" fill="none" stroke="#f4b800" stroke-width="1.3"/><path d="M2.6 9.3H10.2A3.9 3.6 0 1 0 9.4 12.4" fill="none" stroke="#1f7ad8" stroke-width="2.1"/></svg>
<div class="a" style="left:47px;top:240px;white-space:nowrap;font-size:12px">Section0002.xhtml</div>
<svg class="a" style="left:25px;top:255px" width="17" height="18" viewBox="0 0 17 18"><path d="M3.5 1.5H13l2.5 2.5v12.5H3.5z" fill="#fff" stroke="#7a7a7a"/><circle cx="13.5" cy="2.5" r="0.9" fill="#e07070"/><path d="M1 13.8C2 9.5 6 5.5 11.5 4.5" fill="none" stroke="#f4b800" stroke-width="1.3"/><path d="M2.6 9.3H10.2A3.9 3.6 0 1 0 9.4 12.4" fill="none" stroke="#1f7ad8" stroke-width="2.1"/></svg>
<div class="a" style="left:47px;top:258px;white-space:nowrap;font-size:12px">Section0003.xhtml</div>
<svg class="a" style="left:1px;top:277px" width="12" height="10" viewBox="0 0 12 10"><path d="M1.8 2.5L6 6.7l4.2-4.2" fill="none" stroke="#333" stroke-width="1.8"/></svg>
<svg class="a" style="left:16px;top:273px" width="15" height="17" viewBox="0 0 15 17"><rect x="1" y="1.2" width="12.5" height="15.3" fill="#f9e09a"/><rect x="1.5" y="1.7" width="11.5" height="14.3" fill="none" stroke="#f0d26a" stroke-width="1"/><path d="M11 8l2.5 -1.5V16.5H11z" fill="#f2d470"/></svg>
<div class="a" style="left:37px;top:276px;white-space:nowrap;font-size:12px">Styles</div>
<svg class="a" style="left:25px;top:292px" width="17" height="17" viewBox="0 0 17 17"><path d="M4.5 1.5h9l2 2v12h-11z" fill="#f4f4ff" stroke="#5a6aa8"/><text x="6" y="13" text-anchor="middle" font-family="Liberation Serif" font-weight="bold" font-size="14" fill="#901818">A</text><rect x="11.5" y="5" width="2.5" height="2" fill="#2a9a3a"/><rect x="11.5" y="8" width="2.5" height="2" fill="#d83a3a"/><rect x="11.5" y="11" width="2.5" height="2" fill="#3a8ad8"/></svg>
<div class="a" style="left:47px;top:294px;white-space:nowrap;font-size:12px">Style0001.css</div>
<svg class="a" style="left:1px;top:313px" width="12" height="10" viewBox="0 0 12 10"><path d="M1.8 2.5L6 6.7l4.2-4.2" fill="none" stroke="#333" stroke-width="1.8"/></svg>
<svg class="a" style="left:16px;top:309px" width="15" height="17" viewBox="0 0 15 17"><rect x="1" y="1.2" width="12.5" height="15.3" fill="#f9e09a"/><rect x="1.5" y="1.7" width="11.5" height="14.3" fill="none" stroke="#f0d26a" stroke-width="1"/><path d="M11 8l2.5 -1.5V16.5H11z" fill="#f2d470"/></svg>
<div class="a" style="left:37px;top:312px;white-space:nowrap;font-size:12px">Images</div>
<svg class="a" style="left:25px;top:328px" width="17" height="17" viewBox="0 0 17 17"><path d="M2.5 1.5h10l2 2v12h-12z" fill="#e8e8e8" stroke="#9a9a9a"/><rect x="1" y="5.5" width="15" height="8" fill="#5a6a2a"/><text x="8.5" y="12" text-anchor="middle" font-family="Liberation Sans" font-weight="bold" font-size="6.5" fill="#e8e0a0">JPG</text></svg>
<div class="a" style="left:47px;top:330px;white-space:nowrap;font-size:12px">0008_06.jpg</div>
<svg class="a" style="left:16px;top:345px" width="15" height="17" viewBox="0 0 15 17"><rect x="1" y="1.2" width="12.5" height="15.3" fill="#f9e09a"/><rect x="1.5" y="1.7" width="11.5" height="14.3" fill="none" stroke="#f0d26a" stroke-width="1"/><path d="M11 8l2.5 -1.5V16.5H11z" fill="#f2d470"/></svg>
<div class="a" style="left:37px;top:348px;white-space:nowrap;font-size:12px">Fonts</div>
<svg class="a" style="left:16px;top:363px" width="15" height="17" viewBox="0 0 15 17"><rect x="1" y="1.2" width="12.5" height="15.3" fill="#f9e09a"/><rect x="1.5" y="1.7" width="11.5" height="14.3" fill="none" stroke="#f0d26a" stroke-width="1"/><path d="M11 8l2.5 -1.5V16.5H11z" fill="#f2d470"/></svg>
<div class="a" style="left:37px;top:366px;white-space:nowrap;font-size:12px">Audio</div>
<svg class="a" style="left:16px;top:381px" width="15" height="17" viewBox="0 0 15 17"><rect x="1" y="1.2" width="12.5" height="15.3" fill="#f9e09a"/><rect x="1.5" y="1.7" width="11.5" height="14.3" fill="none" stroke="#f0d26a" stroke-width="1"/><path d="M11 8l2.5 -1.5V16.5H11z" fill="#f2d470"/></svg>
<div class="a" style="left:37px;top:384px;white-space:nowrap;font-size:12px">Video</div>
<svg class="a" style="left:16px;top:399px" width="15" height="17" viewBox="0 0 15 17"><rect x="1" y="1.2" width="12.5" height="15.3" fill="#f9e09a"/><rect x="1.5" y="1.7" width="11.5" height="14.3" fill="none" stroke="#f0d26a" stroke-width="1"/><path d="M11 8l2.5 -1.5V16.5H11z" fill="#f2d470"/></svg>
<div class="a" style="left:37px;top:402px;white-space:nowrap;font-size:12px">Misc</div>
<svg class="a" style="left:16px;top:417px" width="17" height="18" viewBox="0 0 17 18"><path d="M3 1h10v16H3z" fill="#6a4a1a"/><path d="M5 2h9v14H5z" fill="#9a7a3a"/><circle cx="10" cy="9" r="3" fill="#b8d8f0" stroke="#eee"/><path d="M3 2v15" stroke="#2a1a0a" stroke-width="2"/></svg>
<div class="a" style="left:37px;top:420px;white-space:nowrap;font-size:12px">content.opf</div>
<div class="a" style="left:816px;top:146px;width:142px;height:288px;background:#fff;border:1px solid #828790"></div>
<div class="a" style="left:835px;top:150px;white-space:nowrap;font-size:12px">Start</div>
<div class="a" style="left:174px;top:124px;width:638px;height:310px;background:#f0f0f0;border:1px solid #828790;border-top:none"></div>
<div class="a" style="left:175px;top:147px;width:636px;height:1px;background:#9a9a9a"></div>
<div class="a" style="left:188px;top:126px;width:131px;height:21px;background:#f0f0f0;border:1px solid #d6d6d6;border-bottom:none"></div>
<svg class="a" style="left:200px;top:128px" width="17" height="17" viewBox="0 0 17 17"><path d="M4.5 1.5h9l2 2v12h-11z" fill="#f4f4ff" stroke="#5a6aa8"/><text x="6" y="13" text-anchor="middle" font-family="Liberation Serif" font-weight="bold" font-size="14" fill="#901818">A</text><rect x="11.5" y="5" width="2.5" height="2" fill="#2a9a3a"/><rect x="11.5" y="8" width="2.5" height="2" fill="#d83a3a"/><rect x="11.5" y="11" width="2.5" height="2" fill="#3a8ad8"/></svg>
<div class="a" style="left:220px;top:132px;white-space:nowrap;font-size:11px;letter-spacing:-0.12px">Style0001.css</div>
<svg class="a" style="left:292px;top:130px" width="14" height="14" viewBox="0 0 14 14"><rect x="0.5" y="0.5" width="13" height="13" rx="1.5" fill="#c8c8c8" stroke="#b0b0b0"/><path d="M4 4l6 6M10 4l-6 6" stroke="#fff" stroke-width="1.8"/></svg>
<div class="a" style="left:475px;top:126px;width:151px;height:21px;background:#f0f0f0;border:1px solid #d6d6d6;border-bottom:none"></div>
<svg class="a" style="left:484px;top:127px" width="17" height="18" viewBox="0 0 17 18"><path d="M3.5 1.5H13l2.5 2.5v12.5H3.5z" fill="#fff" stroke="#7a7a7a"/><circle cx="13.5" cy="2.5" r="0.9" fill="#e07070"/><path d="M1 13.8C2 9.5 6 5.5 11.5 4.5" fill="none" stroke="#f4b800" stroke-width="1.3"/><path d="M2.6 9.3H10.2A3.9 3.6 0 1 0 9.4 12.4" fill="none" stroke="#1f7ad8" stroke-width="2.1"/></svg>
<div class="a" style="left:504px;top:132px;white-space:nowrap;font-size:11px;letter-spacing:-0.12px">Section0002.xhtml</div>
<svg class="a" style="left:599px;top:130px" width="14" height="14" viewBox="0 0 14 14"><rect x="0.5" y="0.5" width="13" height="13" rx="1.5" fill="#c8c8c8" stroke="#b0b0b0"/><path d="M4 4l6 6M10 4l-6 6" stroke="#fff" stroke-width="1.8"/></svg>
<div class="a" style="left:626px;top:126px;width:151px;height:21px;background:#f0f0f0;border:1px solid #d6d6d6;border-bottom:none"></div>
<svg class="a" style="left:638px;top:127px" width="17" height="18" viewBox="0 0 17 18"><path d="M3.5 1.5H13l2.5 2.5v12.5H3.5z" fill="#fff" stroke="#7a7a7a"/><circle cx="13.5" cy="2.5" r="0.9" fill="#e07070"/><path d="M1 13.8C2 9.5 6 5.5 11.5 4.5" fill="none" stroke="#f4b800" stroke-width="1.3"/><path d="M2.6 9.3H10.2A3.9 3.6 0 1 0 9.4 12.4" fill="none" stroke="#1f7ad8" stroke-width="2.1"/></svg>
<div class="a" style="left:657px;top:132px;white-space:nowrap;font-size:11px;letter-spacing:-0.12px">Section0003.xhtml</div>
<svg class="a" style="left:751px;top:130px" width="14" height="14" viewBox="0 0 14 14"><rect x="0.5" y="0.5" width="13" height="13" rx="1.5" fill="#c8c8c8" stroke="#b0b0b0"/><path d="M4 4l6 6M10 4l-6 6" stroke="#fff" stroke-width="1.8"/></svg>
<div class="a" style="left:319px;top:124px;width:156px;height:23px;background:#fff"></div>
<svg class="a" style="left:332px;top:127px" width="17" height="18" viewBox="0 0 17 18"><path d="M3.5 1.5H13l2.5 2.5v12.5H3.5z" fill="#fff" stroke="#7a7a7a"/><circle cx="13.5" cy="2.5" r="0.9" fill="#e07070"/><path d="M1 13.8C2 9.5 6 5.5 11.5 4.5" fill="none" stroke="#f4b800" stroke-width="1.3"/><path d="M2.6 9.3H10.2A3.9 3.6 0 1 0 9.4 12.4" fill="none" stroke="#1f7ad8" stroke-width="2.1"/></svg>
<div class="a" style="left:351px;top:132px;white-space:nowrap;font-size:11px;letter-spacing:-0.12px">Section0001.xhtml</div>
<svg class="a" style="left:446px;top:130px" width="14" height="14" viewBox="0 0 14 14"><rect x="0.5" y="0.5" width="13" height="13" rx="1.5" fill="#e86a4a" stroke="#c84a2a"/><path d="M4 4l6 6M10 4l-6 6" stroke="#fff" stroke-width="1.8"/></svg>
<div class="a" style="left:175px;top:126px;width:13px;height:21px;border-top:1px solid #d6d6d6"></div>
<div class="a" style="left:779px;top:124px;width:16px;height:23px;background:#d8e8f5"></div>
<svg class="a" style="left:782px;top:128px" width="12" height="14" viewBox="0 0 12 14"><path d="M8 1.5L2 7l6 5.5z" fill="#000"/></svg>
<svg class="a" style="left:798px;top:128px" width="12" height="14" viewBox="0 0 12 14"><path d="M3 1.5L9 7l-6 5.5z" fill="#9a9a9a"/></svg>
<div class="a" style="left:175px;top:148px;width:636px;height:285px;background:#fff"></div>
<div class="a" style="left:795px;top:148px;width:16px;height:285px;background:#f0f0f0"></div>
<div class="a" style="left:795px;top:166px;width:16px;height:18px;background:#cdcdcd"></div>
<svg class="a" style="left:795px;top:148px" width="16" height="14" viewBox="0 0 16 14"><path d="M4.5 10L8 6.5l3.5 3.5" fill="none" stroke="#606060" stroke-width="1.6"/></svg>
<svg class="a" style="left:795px;top:417px" width="16" height="14" viewBox="0 0 16 14"><path d="M4.5 5L8 8.5l3.5-3.5" fill="none" stroke="#606060" stroke-width="1.6"/></svg>
<div class="a" style="left:428px;top:152px;width:1px;height:29px;background:#000"></div>
<div class="a" style="left:284px;top:153px;white-space:nowrap;font-size:24.5px;font-weight:bold;line-height:28px;width:400px;text-align:center">Rozdzia&#322; I</div>
<div class="a" style="left:175px;top:147px;width:620px;height:286px;overflow:hidden">
<div class="jl" style="top:55px;left:32px;width:580px">Pewnego razu zdarzyło się, że latarnik w Aspinwall, niedaleko Panamy, przepadł</div>
<div class="jl" style="top:74px;left:8px;width:604px">bez wieści. Ponieważ stało się to wśród burzy, przypuszczano, że nieszczęśliwy musiał</div>
<div class="jl" style="top:93px;left:8px;width:604px">podejść nad sam brzeg skalistej wysepki, na której stoi latarnia, i został spłukany przez</div>
<div class="jl" style="top:112px;left:8px;width:604px">bałwan. Przypuszczenie to było tym prawdopodobniejsze, że na drugi dzień nie</div>
<div class="jl" style="top:131px;left:8px;width:604px">znaleziono jego łódki stojącej w skalistym wrębie. Zawakowało tedy miejsce latarnika,</div>
<div class="jl" style="top:150px;left:8px;width:604px">które trzeba było jak najprędzej obsadzić, ponieważ latarnia niemałe ma znaczenie tak</div>
<div class="jl" style="top:169px;left:8px;width:604px">dla ruchu miejscowego, jak i dla okrętów idących z New Yorku do Panamy. Zatoka</div>
<div class="jl" style="top:188px;left:8px;width:604px">Moskitów obfituje w piaszczyste ławice i zaspy, między którymi droga nawet w dzień jest</div>
<div class="jl" style="top:207px;left:8px;width:604px">trudna, w nocy zaś, zwłaszcza wśród mgieł podnoszących się często na tych</div>
<div class="jl" style="top:226px;left:8px;width:604px">ogrzewanych podzwrotnikowym słońcem wodach prawie niepodobna. Jedynym</div>
<div class="jl" style="top:245px;left:8px;width:604px">wówczas przewodnikiem dla licznych statków bywa światło latarni. Kłopot wynalezienia</div>
<div class="jl" style="top:264px;left:8px;width:604px">nowego latarnika spadł na konsula Stanów Zjednoczonych, rezydującego w Panamie, a</div>
</div>
<div class="a" style="left:703px;top:444px;white-space:nowrap;font-size:12px;letter-spacing:-0.5px">100%</div>
<div class="a" style="left:735px;top:438px;width:1px;height:24px;background:#dcdcdc"></div>
<div class="a" style="left:741px;top:440px;width:21px;height:20px;background:#e0e0e0;border:1px solid #a8a8a8"></div>
<svg class="a" style="left:741px;top:440px" width="21" height="20" viewBox="0 0 21 20"><rect x="4.5" y="8.5" width="11" height="4" fill="#a8c8f0" stroke="#3a6ab8"/></svg>
<div class="a" style="left:769px;top:444px;width:141px;height:3px;background:#e6e6e6;border:1px solid #d0d0d0"></div>
<svg class="a" style="left:833px;top:436px" width="13" height="21" viewBox="0 0 13 21"><path d="M0.5 0.5h12v14l-6 5.5-6-5.5z" fill="#0a6cd8"/></svg>
<div class="a" style="left:774px;top:458px;width:1px;height:3px;background:#a0a0a0"></div>
<div class="a" style="left:839px;top:458px;width:1px;height:3px;background:#a0a0a0"></div>
<div class="a" style="left:903px;top:458px;width:1px;height:3px;background:#a0a0a0"></div>
<div class="a" style="left:916px;top:440px;width:21px;height:20px;background:#e0e0e0;border:1px solid #a8a8a8"></div>
<svg class="a" style="left:916px;top:440px" width="21" height="20" viewBox="0 0 21 20"><path d="M8.5 4.5h3v4h4v3h-4v4h-3v-4h-4v-3h4z" fill="#b8d4f4" stroke="#2a5ab0"/></svg>
<div class="a" style="left:910px;top:438px;width:1px;height:24px;background:#e4e4e4"></div>
<div class="a" style="left:940px;top:438px;width:1px;height:24px;background:#e4e4e4"></div>
<div class="a" style="left:953px;top:456px;width:2px;height:2px;background:#b8b8b8"></div>
<div class="a" style="left:950px;top:459px;width:2px;height:2px;background:#b8b8b8"></div>
<div class="a" style="left:953px;top:459px;width:2px;height:2px;background:#b8b8b8"></div>
<div class="a" style="left:947px;top:462px;width:2px;height:2px;background:#b8b8b8"></div>
<div class="a" style="left:950px;top:462px;width:2px;height:2px;background:#b8b8b8"></div>
<div class="a" style="left:953px;top:462px;width:2px;height:2px;background:#b8b8b8"></div>
<div class="a" style="left:0px;top:31px;width:1px;height:436px;background:#744da9"></div>
<div class="a" style="left:958px;top:31px;width:1px;height:436px;background:#744da9"></div>
<div class="a" style="left:0px;top:466px;width:959px;height:1px;background:#744da9"></div>
</body></html>
